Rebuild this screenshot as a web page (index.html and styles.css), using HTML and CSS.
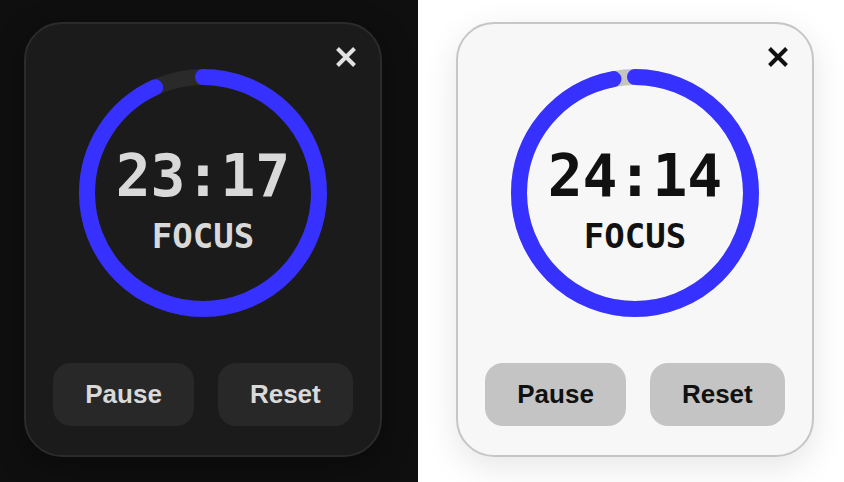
FILE: index.html
```html
<html>

<head>
	<title>Focus timer</title>
	<link rel="stylesheet" href="styles.css">
</head>

<body>
	<div class="page">

		<div class="panel dark">
			<div class="card">
				<button class="close" aria-label="Close">
					<svg width="22" height="22" viewBox="0 0 22 22">
						<path d="M2.5 2.5 L19.5 19.5 M19.5 2.5 L2.5 19.5" />
					</svg>
				</button>

				<div class="ring">
					<svg class="ring-svg" width="248" height="248" viewBox="0 0 248 248">
						<circle class="track" cx="124" cy="124" r="116" />
						<!-- 23:17 left of 25:00 -->
						<circle class="progress" cx="124" cy="124" r="116" stroke-dasharray="678.8 728.9" />
					</svg>
					<div class="readout">
						<div class="time">23:17</div>
						<div class="mode">FOCUS</div>
					</div>
				</div>

				<div class="actions">
					<button class="btn">Pause</button>
					<button class="btn">Reset</button>
				</div>
			</div>
		</div>

		<div class="panel light">
			<div class="card">
				<button class="close" aria-label="Close">
					<svg width="22" height="22" viewBox="0 0 22 22">
						<path d="M2.5 2.5 L19.5 19.5 M19.5 2.5 L2.5 19.5" />
					</svg>
				</button>

				<div class="ring">
					<svg class="ring-svg" width="248" height="248" viewBox="0 0 248 248">
						<circle class="track" cx="124" cy="124" r="116" />
						<!-- 24:14 left of 25:00 -->
						<circle class="progress" cx="124" cy="124" r="116" stroke-dasharray="706.5 728.9" />
					</svg>
					<div class="readout">
						<div class="time">24:14</div>
						<div class="mode">FOCUS</div>
					</div>
				</div>

				<div class="actions">
					<button class="btn">Pause</button>
					<button class="btn">Reset</button>
				</div>
			</div>
		</div>

	</div>
</body>

</html>
```

FILE: styles.css
```css
body {
    margin: 0;
    padding: 0;
    font-family: "Liberation Sans", Arial, sans-serif;
}

.page {
    display: flex;
    width: 844px;
    height: 482px;
    overflow: hidden;
}

.panel {
    height: 482px;
    box-sizing: border-box;
    padding-top: 22px;
}

.dark {
    width: 418px;
    padding-left: 24px;
    background-color: #0f0f0f;
}

.light {
    flex: 1;
    padding-left: 38px;
    background-color: #fff;
}

/* card */
.card {
    position: relative;
    width: 358px;
    height: 435px;
    box-sizing: border-box;
    border-radius: 38px;
    border: 2px solid;
    padding-top: 45px;
    display: flex;
    flex-direction: column;
    align-items: center;
}

.dark .card {
    background-color: #1b1b1b;
    border-color: #2b2b2b;
    color: #d9d9d9;
    box-shadow: 0 8px 30px rgba(0, 0, 0, 0.4);
}

.light .card {
    background-color: #f7f7f7;
    border-color: #c6c6c6;
    color: #111;
    box-shadow: 0 10px 34px rgba(0, 0, 0, 0.1);
}

.close {
    position: absolute;
    top: 20px;
    right: 21px;
    width: 26px;
    height: 26px;
    padding: 0;
    border: none;
    background: none;
    display: flex;
    align-items: center;
    justify-content: center;
    cursor: pointer;
}

.close path {
    fill: none;
    stroke-width: 4;
}

.dark .close path {
    stroke: #e2e2e2;
}

.light .close path {
    stroke: #111;
}

/* ring */
.ring {
    display: grid;
    place-items: center;
    width: 248px;
    height: 248px;
}

.ring-svg,
.readout {
    grid-area: 1 / 1;
}

.ring-svg {
    transform: rotate(-90deg);
}

.ring circle {
    fill: none;
    stroke-width: 16;
}

.dark .track {
    stroke: #2a2a2a;
}

.light .track {
    stroke: #c4c4c4;
}

.progress {
    stroke: #3631fe;
    stroke-linecap: round;
}

.readout {
    display: flex;
    flex-direction: column;
    align-items: center;
    font-family: "DejaVu Sans Mono", monospace;
    font-weight: bold;
    margin-top: 14px;
}

.time {
    font-size: 58px;
    line-height: 60px;
}

.mode {
    font-size: 34px;
    line-height: 36px;
    margin-top: 12px;
}

/* buttons */
.actions {
    display: flex;
    gap: 24px;
    margin-top: 46px;
}

.btn {
    height: 63px;
    padding: 0 32px;
    border: none;
    border-radius: 18px;
    font-family: "Liberation Sans", Arial, sans-serif;
    font-weight: bold;
    font-size: 26px;
    cursor: pointer;
}

.dark .btn {
    background-color: #282828;
    color: #d9d9d9;
}

.light .btn {
    background-color: #c4c4c4;
    color: #111;
}
```
